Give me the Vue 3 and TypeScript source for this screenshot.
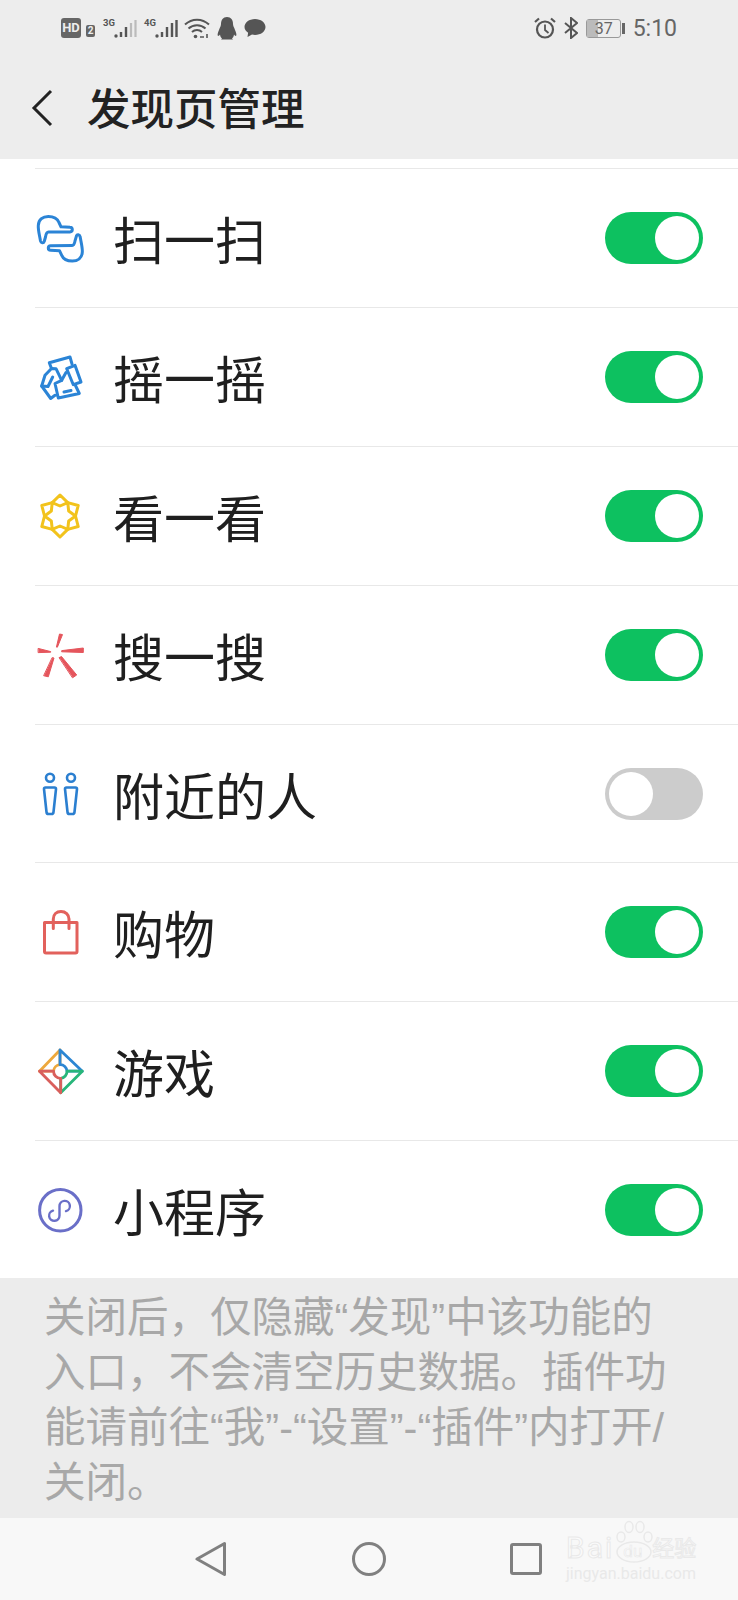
<script setup lang="ts">
import { ref } from 'vue'

const rows = ref([
  { id: 'scan', name: '扫一扫', on: true },
  { id: 'shake', name: '摇一摇', on: true },
  { id: 'look', name: '看一看', on: true },
  { id: 'search', name: '搜一搜', on: true },
  { id: 'nearby', name: '附近的人', on: false },
  { id: 'shop', name: '购物', on: true },
  { id: 'game', name: '游戏', on: true },
  { id: 'mini', name: '小程序', on: true }
])
</script>

<template>
  <div class="page">
    <div class="head">
      <!-- 状态栏 -->
      <div class="status">
        <div class="status-left">
          <span class="hd">HD</span>
          <span class="sim">2</span>
          <div class="signal">
            <span class="net">3G</span>
            <svg width="23" height="21" viewBox="0 0 23 21">
              <circle cx="2" cy="18" r="1.7" fill="#555" />
              <path d="M7 19v-5M12 19V9" stroke="#555" stroke-width="2.4" />
              <path d="M17 19V5M21.5 19V2" stroke="#bbb" stroke-width="2.2" />
            </svg>
          </div>
          <div class="signal last">
            <span class="net">4G</span>
            <svg width="23" height="21" viewBox="0 0 23 21">
              <circle cx="2" cy="18" r="1.7" fill="#555" />
              <path d="M7 19v-5M12 19V9M17 19V5M21.5 19V2" stroke="#555" stroke-width="2.4" />
            </svg>
          </div>
          <svg width="26" height="22" viewBox="0 0 26 22" fill="none" stroke="#555" stroke-width="2">
            <path d="M1 7.5c7-6.500 17-6.500 24 0M4.500 11.500c4.800-4.500 12.200-4.500 17 0M8 15c2.800-2.600 7.200-2.600 10 0" />
            <circle cx="11.500" cy="19.500" r="1.800" fill="#555" stroke="none" />
            <path d="M16 20h4M23 17v4" stroke-width="1.6" />
          </svg>
          <svg class="qq" width="20" height="23" viewBox="0 0 20 23">
            <path fill="#555" d="M10 0c4 0 6 3 6 7 0 2 1 3 2 6 1 2 2 5 1 6-1 0-1.500-1-2-1.500-.2 2-1 3-2 4l1 1H4l1-1c-1-1-1.800-2-2-4-.5.500-1 1.500-2 1.500-1-1 0-4 1-6 1-3 2-4 2-6 0-4 2-7 6-7z" />
          </svg>
          <svg class="chat" width="22" height="20" viewBox="0 0 22 20">
            <path fill="#555" d="M11 1c5.800 0 10.500 3.600 10.500 8s-4.700 8-10.500 8c-1 0-2-.1-3-.4L3.500 19l.6-4.200C2 13.400.5 11.300.5 9 .5 4.600 5.200 1 11 1z" />
          </svg>
        </div>
        <div class="status-right">
          <svg width="22" height="22" viewBox="0 0 22 22" fill="none" stroke="#555" stroke-width="2.2">
            <circle cx="11" cy="12.500" r="8" />
            <path d="M11 7.500v5.500l3.500 3" stroke-width="1.8" />
            <path d="M1 5l4-3.500M21 5l-4-3.500" />
          </svg>
          <svg width="14" height="22" viewBox="0 0 14 22" fill="none" stroke="#555" stroke-width="2">
            <path d="M1 6l12 10-6 5V1l6 5L1 16" />
          </svg>
          <div class="battery">
            <div class="battery-body">
              <div class="battery-fill"></div>
              <span class="battery-num">37</span>
            </div>
            <div class="battery-tip"></div>
          </div>
          <span class="time">5:10</span>
        </div>
      </div>
      <!-- 标题栏 -->
      <div class="toolbar">
        <svg class="back" width="22" height="38" viewBox="0 0 22 38" fill="none" stroke="#222" stroke-width="3">
          <path d="M20 2L3 19l17 17" />
        </svg>
        <span class="title">发现页管理</span>
      </div>
    </div>

    <div class="list">
      <div v-for="row in rows" :key="row.id" class="row">
        <svg class="icon" width="50" height="50" viewBox="0 0 50 50" fill="none" stroke-width="3" stroke-linecap="round" stroke-linejoin="round">
          <g v-if="row.id === 'scan'" stroke="#2b84d6">
            <path d="M5.500 28C4.500 22 3 17 3.300 12.500 3.600 6.500 8 3.500 13.300 3.500 19 3.500 22.500 6 24 9.500L26 13.800 35 14.300a2.200 2.200 0 0 1 0 4.600L13.500 19C11.500 19 11 21 10.500 24L9.200 28.500C8.500 30.500 6 30 5.500 28Z" />
            <path transform="rotate(180 25.300 25.800)" d="M5.500 28C4.500 22 3 17 3.300 12.500 3.600 6.500 8 3.500 13.300 3.500 19 3.500 22.500 6 24 9.500L26 13.800 35 14.300a2.200 2.200 0 0 1 0 4.600L13.500 19C11.500 19 11 21 10.500 24L9.200 28.500C8.500 30.500 6 30 5.500 28Z" />
          </g>
          <g v-else-if="row.id === 'shake'" stroke="#2b84d6" transform="translate(0 1.5)">
            <path d="M16.500 15L14.300 9.200 35 3.500 37 10.500" />
            <path d="M31.700 15.200L40 11.800 46 28.500 38.300 31.200Z" />
            <path d="M40 31L44.300 40 23.300 44.500 20 30 26.700 26.800 21 15.200 16.500 15 10 21.800 6.700 32.500 15.700 45 20 41.800" />
            <path d="M17.700 23.500L13 33 6.700 32.500" />
            <path d="M26.700 26.800L31 19" />
            <path d="M29 38.500L36 37" />
          </g>
          <g v-else-if="row.id === 'look'" stroke="#f2c31c">
            <path d="M25 4L32.750 11.580 43.200 14.500 40.500 25 43.200 35.500 32.750 38.420 25 46 17.250 38.420 6.800 35.500 9.500 25 6.800 14.500 17.250 11.580Z" />
            <path d="M25 15L32.750 11.580 33.660 20 40.500 25 33.660 30 32.750 38.420 25 35 17.250 38.420 16.340 30 9.500 25 16.340 20 17.250 11.580Z" />
          </g>
          <g v-else-if="row.id === 'search'" fill="#e5555c" stroke="#e5555c" stroke-width="1">
            <path d="M21.500 16.700L24.500 4 27.500 4.600 22.500 16.900Z" />
            <path d="M27 20.600L48.300 18V22.500L27 21.800Z" />
            <path d="M3.500 18.500L15.700 21.600 15.700 22.200 3.500 22.600Z" />
            <path d="M17.500 27.700L19 28 13.300 46.800 9 45.800Z" />
            <path d="M24.400 27.500L26.500 26.500 41.700 45 37.800 47.600Z" />
          </g>
          <g v-else-if="row.id === 'nearby'" stroke="#2b7fd0" stroke-width="2.6">
            <circle cx="15" cy="8.700" r="4" />
            <circle cx="36" cy="8.700" r="4" />
            <path d="M9 20q0-1.500 1.500-1.500h9q1.500 0 1.500 1.500l-2.500 23q-.2 2-2 2h-3q-1.800 0-2-2Z" />
            <path d="M30 20q0-1.500 1.500-1.500h9q1.500 0 1.500 1.500l-2.500 23q-.2 2-2 2h-3q-1.800 0-2-2Z" />
          </g>
          <g v-else-if="row.id === 'shop'" stroke="#e2615c">
            <path d="M9.500 15.500H42V44.500Q42 46 40.500 46H11Q9.500 46 9.500 44.500Z" />
            <path d="M18.300 21.500V12C18.300 7.500 21.500 4.500 26 4.500S34 7.500 34 12V21.500" />
          </g>
          <g v-else-if="row.id === 'game'" stroke-width="2.8">
            <path stroke="#eda83c" d="M25 4L4.500 25.200H18.600A6.800 6.800 0 0 1 25 18.700Z" />
            <path stroke="#2c86d3" d="M25 4L47.300 25.200H32A6.800 6.800 0 0 0 25 18.700Z" />
            <path stroke="#28b67a" d="M47.300 25.200L25.700 46.800V32.300A6.800 6.800 0 0 0 32 25.200Z" />
            <path stroke="#d95f5c" d="M4.500 25.200L25.700 46.800V32.300A6.800 6.800 0 0 1 18.600 25.200Z" />
          </g>
          <g v-else stroke="#6a6fc8" transform="translate(0 1)">
            <circle cx="25.300" cy="24.300" r="20.700" />
            <path d="M18 24.600a5.200 5.200 0 1 0 6.500 5v-9.500a5.200 5.200 0 1 1 6.500 5" stroke-width="2.4" />
          </g>
        </svg>
        <span class="name">{{ row.name }}</span>
        <div :class="['switch', { on: row.on }]" @click="row.on = !row.on">
          <div class="knob"></div>
        </div>
      </div>
    </div>

    <div class="tip">关闭后&#xFF0C;仅隐藏“发现”中该功能的入口&#xFF0C;不会清空历史数据。插件功能请前往“我”-“设置”-“插件”内打开/关闭。</div>

    <div class="nav">
      <svg width="32" height="36" viewBox="0 0 32 36" fill="none" stroke="#808080" stroke-width="3" stroke-linejoin="round">
        <path d="M29.500 2.500V33.500L2 18Z" />
      </svg>
      <svg width="36" height="36" viewBox="0 0 36 36" fill="none" stroke="#808080" stroke-width="3">
        <circle cx="18" cy="18" r="15.500" />
      </svg>
      <svg class="nav-square" width="34" height="34" viewBox="0 0 34 34" fill="none" stroke="#808080" stroke-width="3" stroke-linejoin="round">
        <rect x="2.500" y="2.500" width="29" height="29" rx="1.500" />
      </svg>
      <!-- 水印 -->
      <div class="mark">
        <div class="mark-top">
          <span class="mark-en">Bai</span>
          <div class="paw">
            <svg width="40" height="44" viewBox="0 0 40 44" fill="none" stroke="#e9e9e9" stroke-width="1.5">
              <ellipse cx="20" cy="32" rx="17" ry="10" />
              <ellipse cx="7" cy="17" rx="4" ry="5" />
              <ellipse cx="15" cy="7" rx="4" ry="5.500" />
              <ellipse cx="26" cy="7" rx="4" ry="5.500" />
              <ellipse cx="34" cy="17" rx="4" ry="5" />
            </svg>
            <span class="paw-du">du</span>
          </div>
          <span class="mark-cn">经验</span>
        </div>
        <div class="mark-url">jingyan.baidu.com</div>
      </div>
    </div>
  </div>
</template>

<style scoped>
.page {
  width: 738px;
  height: 1600px;
  display: flex;
  flex-direction: column;
  background: #fff;
  font-family: Roboto, "Noto Sans CJK SC", sans-serif;
  overflow: hidden;
}

.head {
  height: 159px;
  background: #ededed;
  display: flex;
  flex-direction: column;
}

.status {
  height: 56px;
  padding: 0 61px;
  display: flex;
  align-items: center;
  justify-content: space-between;
}

.status-left,
.status-right {
  display: flex;
  align-items: center;
}

.status-left {
  gap: 5px;
}

.status-right {
  gap: 8px;
}

.hd {
  width: 20px;
  height: 20px;
  background: #666;
  border-radius: 3px;
  color: #eee;
  font-size: 13px;
  font-weight: 700;
  line-height: 20px;
  text-align: center;
}

.sim {
  width: 9px;
  height: 12px;
  margin-top: 6px;
  margin-right: 3px;
  background: #666;
  border-radius: 2px;
  color: #eee;
  font-size: 10px;
  font-weight: 700;
  line-height: 12px;
  text-align: center;
}

.signal {
  display: flex;
  align-items: flex-start;
  margin-right: 2px;
}

.signal.last {
  margin-right: 1px;
}

.net {
  width: 11px;
  font-size: 9.5px;
  line-height: 10px;
  font-weight: 700;
  color: #555;
  white-space: nowrap;
}

.qq {
  margin-left: 2px;
}

.chat {
  margin-left: 2px;
}

.battery {
  display: flex;
  align-items: center;
  gap: 1px;
}

.battery-body {
  position: relative;
  width: 35px;
  height: 19px;
  box-sizing: border-box;
  border: 1px solid #999;
  border-radius: 3px;
}

.battery-fill {
  width: 11px;
  height: 100%;
  background: #bbb;
}

.battery-num {
  position: absolute;
  left: 8px;
  top: 0;
  font-size: 16px;
  line-height: 17px;
  color: #666;
}

.battery-tip {
  width: 3px;
  height: 11px;
  background: #666;
}

.time {
  font-size: 23px;
  color: #666;
}

.toolbar {
  flex: 1;
  display: flex;
  align-items: center;
  padding-left: 31px;
}

.title {
  margin-left: 34px;
  margin-top: 6px;
  font-size: 43.5px;
  font-weight: 500;
  line-height: 50px;
  color: #222;
}

.list {
  padding-top: 9px;
  height: 1119px;
  box-sizing: border-box;
}

.row {
  height: 138.9px;
  box-sizing: border-box;
  margin-left: 35px;
  padding-right: 35px;
  border-top: 1px solid #e8e8e8;
  display: flex;
  align-items: center;
}

.icon {
  flex: none;
}

.name {
  flex: 1;
  margin-left: 28px;
  font-size: 51px;
  color: #1f1f1f;
}

.switch {
  width: 98px;
  height: 52px;
  box-sizing: border-box;
  padding: 4px;
  border-radius: 26px;
  background: #cccccc;
  display: flex;
  cursor: pointer;
}

.switch.on {
  background: #0dc160;
  justify-content: flex-end;
}

.knob {
  width: 44px;
  height: 44px;
  border-radius: 50%;
  background: #fff;
}

.tip {
  height: 240px;
  box-sizing: border-box;
  padding: 12px 60px 0 44px;
  background: #ececec;
  font-family: "Liberation Sans", "Noto Sans CJK SC", sans-serif;
  font-size: 41.5px;
  line-height: 55px;
  color: #a8a8a8;
}

.nav {
  position: relative;
  flex: 1;
  background: #f8f8f8;
  display: flex;
  align-items: center;
  padding-left: 195px;
  gap: 124px;
}

.nav-square {
  margin-left: -2px;
}

.mark {
  position: absolute;
  left: 566px;
  top: 0;
  color: #fbfbfb;
  -webkit-text-stroke: 1px #e9e9e9;
}

.mark-top {
  display: flex;
  align-items: flex-end;
  height: 46px;
}

.mark-en {
  font-size: 30px;
  line-height: 32px;
  letter-spacing: 2px;
}

.paw {
  position: relative;
  width: 38px;
  height: 44px;
}

.paw-du {
  position: absolute;
  left: 9px;
  bottom: 3px;
  font-size: 17px;
  line-height: 20px;
  -webkit-text-stroke: 0.6px #e9e9e9;
}

.mark-cn {
  font-size: 22px;
  line-height: 30px;
}

.mark-url {
  font-size: 16px;
  line-height: 20px;
  color: #e9e9e9;
  -webkit-text-stroke: 0;
}
</style>

<style>
html,
body {
  margin: 0;
}
</style>
